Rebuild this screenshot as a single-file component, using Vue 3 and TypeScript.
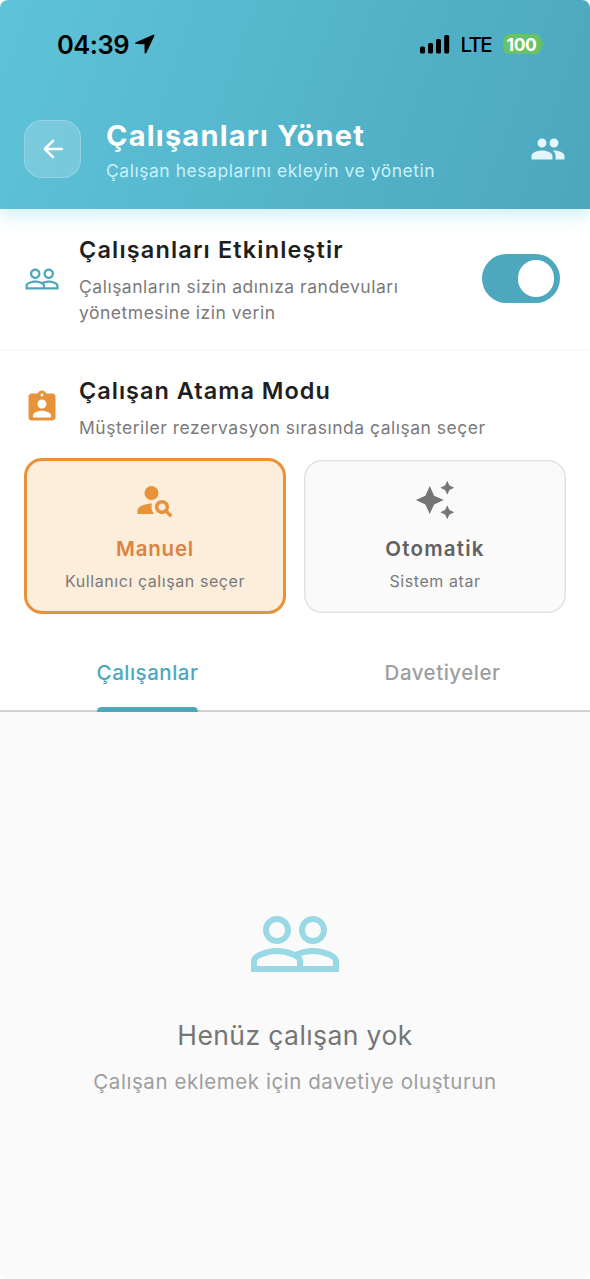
<script setup lang="ts">
import { ref } from 'vue'

type Mode = 'manual' | 'auto'
type Tab = 'staff' | 'invites'

const enabled = ref<boolean>(true)
const mode = ref<Mode>('manual')
const tab = ref<Tab>('staff')

const groupOutline =
  'M16.5 13c-1.2 0-3.07.34-4.5 1-1.43-.67-3.3-1-4.5-1C5.33 13 1 14.08 1 16.25V19h22v-2.75c0-2.17-4.33-3.25-6.5-3.25zm-4 4.5h-10v-1.25c0-.54 2.56-1.75 5-1.75s5 1.21 5 1.75v1.25zm9 0H14v-1.25c0-.46-.2-.86-.52-1.22.88-.3 1.96-.53 3.02-.53 2.44 0 5 1.21 5 1.75v1.25zM7.5 12c1.93 0 3.5-1.57 3.5-3.5S9.43 5 7.5 5 4 6.57 4 8.5 5.57 12 7.5 12zm0-5.5c1.1 0 2 .9 2 2s-.9 2-2 2-2-.9-2-2 .9-2 2-2zm9 5.5c1.93 0 3.5-1.57 3.5-3.5S18.43 5 16.5 5 13 6.57 13 8.5s1.57 3.5 3.5 3.5zm0-5.5c1.1 0 2 .9 2 2s-.9 2-2 2-2-.9-2-2 .9-2 2-2z'
</script>

<template>
  <div class="screen">
    <header class="header">
      <div class="status">
        <span class="time">04:39</span>
        <svg class="location" viewBox="0 0 20 20"><path d="M18.2.7.9 8.3c-1.1.5-.8 1.8.3 1.8l8 .1c.2 0 .3.1.3.3l.1 8c0 1.2 1.3 1.4 1.800.3L19.3 1.9C19.7.9 19.1.3 18.2.7z" /></svg>
        <svg class="signal" viewBox="0 0 30 19">
          <rect x="0" y="11.5" width="5" height="7" rx="1.5" />
          <rect x="8" y="8" width="5" height="10.5" rx="1.5" />
          <rect x="16" y="4" width="5" height="14.5" rx="1.5" />
          <rect x="24.2" y="0" width="5" height="18.5" rx="1.5" />
        </svg>
        <span class="network">LTE</span>
        <span class="battery">100</span>
        <span class="nub"></span>
      </div>
      <div class="bar">
        <button class="back" type="button" aria-label="Geri">
          <svg viewBox="0 0 24 24"><path d="M19 11H7.83l4.88-4.88c.39-.39.39-1.03 0-1.42-.39-.39-1.02-.39-1.41 0l-6.59 6.59c-.39.39-.39 1.02 0 1.41l6.59 6.59c.39.39 1.02.39 1.41 0 .39-.39.39-1.02 0-1.41L7.83 13H19c.55 0 1-.45 1-1s-.45-1-1-1z" /></svg>
        </button>
        <div class="heading">
          <h1>Çalışanları Yönet</h1>
          <p>Çalışan hesaplarını ekleyin ve yönetin</p>
        </div>
        <svg class="people" viewBox="0 0 24 24"><path d="M16 11c1.66 0 2.99-1.34 2.99-3S17.66 5 16 5c-1.66 0-3 1.34-3 3s1.34 3 3 3zm-8 0c1.66 0 2.99-1.34 2.99-3S9.66 5 8 5C6.34 5 5 6.34 5 8s1.34 3 3 3zm0 2c-2.33 0-7 1.17-7 3.5V19h14v-2.5c0-2.33-4.67-3.5-7-3.5zm8 0c-.29 0-.62.02-.97.05 1.16.84 1.97 1.97 1.97 3.45V19h6v-2.5c0-2.33-4.67-3.5-7-3.5z" /></svg>
      </div>
    </header>

    <section class="row enable">
      <svg class="lead teal" viewBox="0 0 24 24"><path :d="groupOutline" /></svg>
      <div class="copy">
        <h2>Çalışanları Etkinleştir</h2>
        <p>Çalışanların sizin adınıza randevuları<br />yönetmesine izin verin</p>
      </div>
      <button class="switch" :class="{ on: enabled }" type="button" role="switch" :aria-checked="enabled" @click="enabled = !enabled">
        <span class="thumb"></span>
      </button>
    </section>

    <section class="assign">
      <div class="row">
        <svg class="lead orange" viewBox="0 0 24 24"><path d="M19 3h-4.18C14.4 1.84 13.3 1 12 1c-1.3 0-2.4.84-2.82 2H5c-1.1 0-2 .9-2 2v14c0 1.1.9 2 2 2h14c1.1 0 2-.9 2-2V5c0-1.1-.9-2-2-2zm-7 0c.55 0 1 .45 1 1s-.45 1-1 1-1-.45-1-1 .45-1 1-1zm0 4c1.66 0 3 1.34 3 3s-1.34 3-3 3-3-1.34-3-3 1.34-3 3-3zm6 12H6v-1.4c0-2 4-3.1 6-3.1s6 1.1 6 3.1V19z" /></svg>
        <div class="copy">
          <h2 class="mode-title">Çalışan Atama Modu</h2>
          <p>Müşteriler rezervasyon sırasında çalışan seçer</p>
        </div>
      </div>
      <div class="cards">
        <button class="card" :class="{ active: mode === 'manual' }" type="button" @click="mode = 'manual'">
          <svg viewBox="0 0 24 24"><circle cx="10" cy="8" r="4" /><path d="M10.35 14.01C7.62 13.91 2 15.27 2 18v2h9.54c-2.47-2.76-1.23-5.89-1.19-5.99zM19.43 18.02c.36-.59.57-1.28.57-2.02 0-2.21-1.79-4-4-4s-4 1.79-4 4 1.79 4 4 4c.74 0 1.43-.22 2.02-.57L20.59 22 22 20.59l-2.57-2.57zM16 18c-1.1 0-2-.9-2-2s.9-2 2-2 2 .9 2 2-.9 2-2 2z" /></svg>
          <strong>Manuel</strong>
          <small>Kullanıcı çalışan seçer</small>
        </button>
        <button class="card" :class="{ active: mode === 'auto' }" type="button" @click="mode = 'auto'">
          <svg viewBox="0 0 24 24"><path d="M19 9l1.25-2.75L23 5l-2.75-1.25L19 1l-1.25 2.75L15 5l2.75 1.25L19 9zm-7.5.5L9 4 6.500 9.5 1 12l5.5 2.5L9 20l2.5-5.5L17 12l-5.5-2.5zM19 15l-1.25 2.75L15 19l2.75 1.25L19 23l1.25-2.75L23 19l-2.75-1.25L19 15z" /></svg>
          <strong class="wide">Otomatik</strong>
          <small>Sistem atar</small>
        </button>
      </div>
    </section>

    <nav class="tabs">
      <button class="tab" :class="{ current: tab === 'staff' }" type="button" @click="tab = 'staff'"><span>Çalışanlar</span></button>
      <button class="tab" :class="{ current: tab === 'invites' }" type="button" @click="tab = 'invites'"><span>Davetiyeler</span></button>
    </nav>

    <main class="empty">
      <svg viewBox="0 0 24 24"><path :d="groupOutline" /></svg>
      <h3>Henüz çalışan yok</h3>
      <p>Çalışan eklemek için davetiye oluşturun</p>
    </main>
  </div>
</template>

<style>
body {
  margin: 0;
  background: #fff;
}
</style>

<style scoped>
.screen {
  width: 590px;
  height: 1279px;
  display: flex;
  flex-direction: column;
  overflow: hidden;
  border-radius: 8px;
  background: #fff;
  font-family: Inter, "Liberation Sans", sans-serif;
  box-sizing: border-box;
}
.screen *,
.screen *::after {
  box-sizing: border-box;
}
h1, h2, h3, p {
  margin: 0;
  white-space: nowrap;
}
svg {
  display: block;
  flex: none;
  fill: currentColor;
}
button {
  padding: 0;
  border: 0;
  background: none;
  font: inherit;
  color: inherit;
}
.header {
  flex: none;
  height: 209px;
  background: linear-gradient(109.5deg, #5ec3d9 0%, #4ca7bd 100%);
  box-shadow: 0 6px 15px rgba(94, 205, 230, 0.3);
  position: relative;
}
.status {
  height: 88px;
  display: flex;
  align-items: center;
  padding-left: 57px;
  color: #000;
}
.time {
  width: 78px;
  padding-top: 1px;
  font-size: 25.5px;
  font-weight: 600;
  line-height: 30px;
  letter-spacing: -0.5px;
}
.location {
  width: 20px;
  height: 20px;
}
.signal {
  width: 30px;
  height: 19px;
  margin-left: 265px;
}
.network {
  width: 42px;
  padding: 1px 0 0 10.5px;
  font-size: 20.5px;
  font-weight: 500;
  line-height: 26px;
  letter-spacing: -1.7px;
}
.battery {
  width: 38px;
  height: 20px;
  margin-left: 10.5px;
  border-radius: 6px;
  background: #67c466;
  color: #fff;
  font-size: 17.5px;
  font-weight: 700;
  line-height: 21px;
  letter-spacing: -0.4px;
  text-align: center;
}
.nub {
  width: 2px;
  height: 6px;
  margin-left: 1px;
  border-radius: 0 2px 2px 0;
  background: #5dbd88;
}
.bar {
  height: 121px;
  display: flex;
  align-items: center;
  padding: 0 24px;
}
.back {
  width: 57px;
  height: 58px;
  display: grid;
  place-items: center;
  border: 1.5px solid rgba(255, 255, 255, 0.2);
  border-radius: 18px;
  background: rgba(255, 255, 255, 0.18);
  color: #fff;
}
.back svg {
  width: 30px;
  height: 30px;
}
.heading {
  flex: 1;
  margin-left: 25px;
  padding-top: 5px;
  color: #fff;
}
h1 {
  font-size: 29px;
  font-weight: 700;
  line-height: 36px;
  letter-spacing: 1.22px;
}
.heading p {
  margin-top: 4px;
  font-size: 17.5px;
  line-height: 26px;
  letter-spacing: 0.53px;
  color: #c9f1fa;
}
.people {
  width: 36px;
  height: 36px;
  color: #e3f6fb;
}
.row {
  display: flex;
  align-items: center;
  padding: 0 24px;
}
.enable {
  flex: none;
  height: 141px;
  padding-right: 30px;
  border-bottom: 1.5px solid #f7f7f7;
}
.lead {
  width: 36px;
  height: 36px;
}
.teal {
  color: #4ea8bd;
}
.orange {
  color: #e8923a;
}
.copy {
  flex: 1;
  margin-left: 19px;
}
h2 {
  font-size: 23.5px;
  font-weight: 600;
  line-height: 34px;
  letter-spacing: 1.15px;
  color: #1f1f1f;
}
.mode-title {
  letter-spacing: 1px;
}
.copy p {
  margin-top: 7px;
  font-size: 17.5px;
  line-height: 25.7px;
  letter-spacing: 0.51px;
  color: #7a7a7a;
}
.switch {
  width: 78px;
  height: 49px;
  display: flex;
  align-items: center;
  margin-bottom: 1px;
  padding: 6px;
  border-radius: 25px;
  background: #d5d5d5;
}
.switch.on {
  justify-content: flex-end;
  background: #4ea8bd;
}
.thumb {
  width: 36.5px;
  height: 36.5px;
  border-radius: 50%;
  background: #fff;
}
.assign {
  flex: none;
  height: 285px;
  padding-top: 24px;
}
.assign .row {
  height: 66px;
}
.cards {
  display: grid;
  grid-template-columns: 1fr 1fr;
  align-items: center;
  gap: 18px;
  height: 156px;
  margin-top: 18px;
  padding: 0 24px;
}
.card {
  height: 153px;
  display: flex;
  flex-direction: column;
  align-items: center;
  justify-content: center;
  border-radius: 18px;
  background: #fafafa;
  box-shadow: inset 0 0 0 1.5px #e3e3e3;
  color: #757575;
}
.card.active {
  height: 156px;
  border: 3px solid #e8923a;
  background: #fceeda;
  box-shadow: none;
  color: #e8923a;
}
.card svg {
  width: 42px;
  height: 42px;
}
.card strong {
  margin-top: 14px;
  font-size: 20.5px;
  font-weight: 600;
  line-height: 28px;
  letter-spacing: 0.8px;
  color: #616161;
}
.card strong.wide {
  letter-spacing: 1.2px;
}
.card.active strong {
  color: #dd8240;
}
.card small {
  margin-top: 6px;
  font-size: 16px;
  line-height: 24px;
  letter-spacing: 0.57px;
  color: #7a7a7a;
}
.tabs {
  flex: none;
  height: 77px;
  display: grid;
  grid-template-columns: 1fr 1fr;
  border-bottom: 2.5px solid #cdd0d2;
}
.tab {
  display: flex;
  justify-content: center;
  height: 77px;
  font-size: 20.5px;
  font-weight: 500;
  letter-spacing: 0.5px;
  color: #9e9e9e;
}
.tab span {
  position: relative;
  height: 77px;
  padding-top: 23px;
  line-height: 30px;
}
.tab.current {
  color: #4ea8bd;
}
.tab.current span::after {
  content: "";
  position: absolute;
  left: 0;
  right: 0;
  bottom: 0.5px;
  height: 4.5px;
  border-radius: 4.5px 4.5px 0 0;
  background: #4ea8bd;
}
.empty {
  flex: 1;
  display: flex;
  flex-direction: column;
  align-items: center;
  padding-top: 183.5px;
  background: #fafafa;
}
.empty svg {
  width: 96px;
  height: 96px;
  color: #99d9e6;
}
h3 {
  margin-top: 25.5px;
  font-size: 26.5px;
  font-weight: 400;
  line-height: 36px;
  letter-spacing: 0.4px;
  color: #757575;
}
.empty p {
  margin-top: 14px;
  font-size: 20.5px;
  line-height: 30px;
  letter-spacing: 0.56px;
  color: #9e9e9e;
}
</style>
